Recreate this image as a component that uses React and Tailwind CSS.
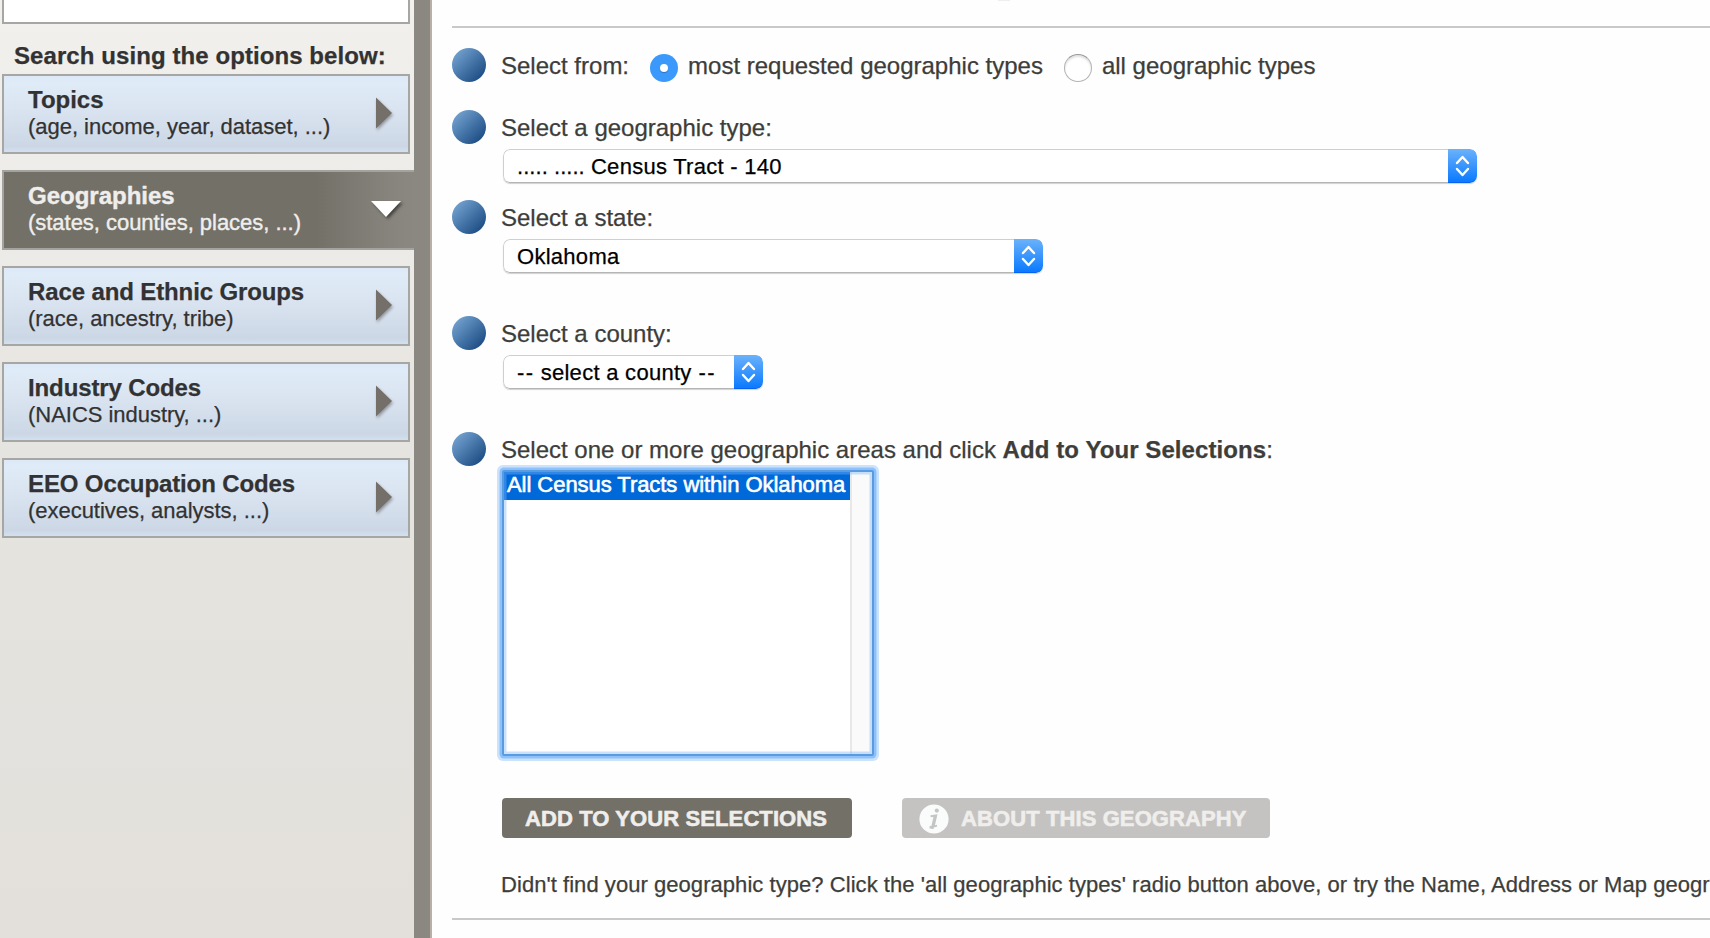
import React from "react";

const OPTIONS = [
  { title: "Topics", hint: "(age, income, year, dataset, ...)" },
  { title: "Geographies", hint: "(states, counties, places, ...)", active: true },
  { title: "Race and Ethnic Groups", hint: "(race, ancestry, tribe)", tight: true },
  { title: "Industry Codes", hint: "(NAICS industry, ...)", tight: true },
  { title: "EEO Occupation Codes", hint: "(executives, analysts, ...)", tight: true },
];

function RightArrow() {
  return (
    <svg width="24" height="40" viewBox="0 0 24 40" className="mt-[18px] mr-[10px] shrink-0 drop-shadow-[1px_2px_1.5px_rgba(60,60,60,0.45)]">
      <path d="M2 3.5 L18 19 L2 34.5 Z" fill="#746f68" />
    </svg>
  );
}

function DownArrow() {
  return (
    <svg width="36" height="24" viewBox="0 0 36 24" className="mt-[26px] mr-[9px] shrink-0 drop-shadow-[2px_2px_1.5px_rgba(40,38,34,0.7)]">
      <path d="M2 3 L32 3 L17 19 Z" fill="#ffffff" />
    </svg>
  );
}

function Option({ title, hint, active, tight }) {
  return (
    <div
      className={
        active
          ? "flex h-20 w-[412px] justify-between border-y-2 border-l-2 border-[#a3a39f] bg-[linear-gradient(to_right,#727067_0%,#727067_76%,#87847d_94%,#8b8881_100%)] text-[#efeeec] [-webkit-text-stroke:0.4px_#efeeec]"
          : "flex h-20 w-[408px] justify-between border-2 border-[#a6a6a4] bg-[linear-gradient(to_bottom,#dde9f7_0%,#e0ebf8_10%,#dbe5f2_40%,#ccd7e5_93%,#d2e0ef_100%)] text-[#323232]"
      }
    >
      <div className="pt-[10px] pl-6">
        <div className={tight ? "text-[24px] leading-7 font-bold tracking-[-0.12px]" : "text-[24px] leading-7 font-bold"}>{title}</div>
        <div className="text-[22px] leading-[26px] tracking-[-0.03px]">{hint}</div>
      </div>
      {active ? <DownArrow /> : <RightArrow />}
    </div>
  );
}

function Step({ children, className = "" }) {
  return (
    <div className={"flex h-[34px] items-start whitespace-nowrap " + className}>
      <span className="mr-[15px] size-[34px] shrink-0 rounded-full bg-[linear-gradient(135deg,#74a2d0_10%,#4c7cae_45%,#1c4c82_88%)]" />
      <span className="flex pt-1 text-[24px] leading-7">{children}</span>
    </div>
  );
}

function Select({ children, className }) {
  return (
    <div
      className={
        "mt-[5px] ml-[51px] flex h-[34px] overflow-hidden rounded-[7px] bg-white text-[22px] tracking-[0.28px] text-black shadow-[0_1px_1px_rgba(0,0,0,0.18)] " + className
      }
    >
      <div className="flex-1 rounded-l-[7px] border border-r-0 border-[#cfcfcf] border-b-[#b5b5b5] pt-1 pl-[13px] leading-[26px] whitespace-pre">{children}</div>
      <div className="flex w-[29px] items-center justify-center rounded-r-[7px] border-b border-[#0a63f0] bg-[linear-gradient(to_bottom,#6bb2fb,#0a7aff)]">
        <svg width="15" height="22" viewBox="0 0 15 22" fill="none" stroke="#fff" strokeWidth="2.4" strokeLinecap="round" strokeLinejoin="round">
          <path d="M2 8 L7.5 2 L13 8 M2 14 L7.5 20 L13 14" />
        </svg>
      </div>
    </div>
  );
}

export default function App() {
  return (
    <div className="flex h-[938px] w-[1710px] overflow-hidden bg-[#fefefe] font-['Liberation_Sans',Arial,sans-serif] text-[#3d3d3a] [-webkit-text-stroke:0.25px_currentColor]">
      <aside className="w-[414px] shrink-0 bg-[linear-gradient(to_bottom,#f1f0ec_0%,#ebeae6_30%,#e8e5e1_42%,#e4e3de_60%,#e3e0dc_100%)] pl-0.5">
        <div className="h-6 w-[408px] border-2 border-t-0 border-[#a6a6a4] bg-white" />
        <div className="mt-[18px] pl-3 text-[24px] leading-7 font-bold tracking-[0.08px] text-[#323232]">Search using the options below:</div>
        <div className="mt-1 flex flex-col gap-4">
          {OPTIONS.map((o) => (
            <Option key={o.title} {...o} />
          ))}
        </div>
      </aside>
      <div className="w-[18px] shrink-0 border-r-2 border-[#b8b0a6] bg-[#8b8881]" />

      <main className="min-w-0 flex-1 pl-5">
        <div className="mb-5 h-7 border-b-2 border-[#c9c9c9]">
          <div className="ml-[546px] h-px w-3 bg-[#eeeeee]" />
        </div>

        <Step>
          Select from:
          <span className="mt-[2px] mr-[10px] ml-[21px] flex size-7 items-center justify-center rounded-full bg-[#3b99fc]">
            <span className="size-2 rounded-full bg-white shadow-[0_1px_1px_rgba(0,0,0,0.25)]" />
          </span>
          most requested geographic types
          <span className="mt-[2px] mr-[10px] ml-[21px] size-7 rounded-full border border-[#b3b3b3] border-t-[#999999] bg-white shadow-[inset_0_2px_2px_rgba(0,0,0,0.12)]" />
          all geographic types
        </Step>

        <Step className="mt-7">Select a geographic type:</Step>
        <Select className="w-[974px]">
          <span className="tracking-[0.05px]">..... ..... </span>Census Tract - 140
        </Select>

        <Step className="mt-[17px]">Select a state:</Step>
        <Select className="w-[540px]">Oklahoma</Select>

        <Step className="mt-[43px]">Select a county:</Step>
        <Select className="w-[260px]">
          <span className="tracking-[1.3px]">--</span> select a county <span className="ml-[0.5px] tracking-[1.5px]">--</span>
        </Select>

        <Step className="mt-[43px]">
          <span className="whitespace-pre">Select one or more geographic areas and click </span>
          <b className="tracking-[0.08px]">Add to Your Selections</b>:
        </Step>

        <div className="relative mt-1 ml-[50px] flex h-[286px] w-[372px] rounded-[2px] border-2 border-[#5a9be0] bg-white shadow-[0_0_0_2.5px_#8cc1fb,0_0_0_5px_#cce3fe]">
          <div className="w-[346px]">
            <div className="h-7 bg-[#0069d9] pl-[3px] text-[22px] leading-[26px] tracking-[-0.05px] whitespace-nowrap text-white [-webkit-text-stroke:0.6px_white]">
              All Census Tracts within Oklahoma
            </div>
          </div>
          <div className="flex-1 border-l-2 border-[#e8e8e8] bg-[#fafafa]" />
          <div className="pointer-events-none absolute inset-0 shadow-[inset_0_0_0_2.5px_rgba(120,180,250,0.4)]" />
        </div>

        <div className="mt-[42px] ml-[50px] flex h-10 gap-[50px] text-[22px] leading-[26px] font-bold tracking-[0.1px] whitespace-nowrap text-[#efeeec]">
          <div className="w-[350px] rounded-[4px] bg-[#727067] pt-2 pl-[23px] [-webkit-text-stroke:0.6px_#efeeec]">ADD TO YOUR SELECTIONS</div>
          <div className="flex w-[368px] rounded-[4px] bg-[#c4c3c1] pt-2 pl-[17px] [-webkit-text-stroke:0.6px_#efeeec]">
            <svg width="30" height="30" viewBox="0 0 30 30" className="-mt-0.5 mr-3">
              <circle cx="15" cy="15" r="14.6" fill="#fafbfb" />
              <circle cx="17.8" cy="6.6" r="2.1" fill="#c4c5c5" />
              <path d="M11.6 12.2 L17.2 11.4 L14.6 22.6 L18 21.6" fill="none" stroke="#c4c5c5" strokeWidth="2" />
              <path d="M16 12 L13.4 23.6 L10.6 23" fill="none" stroke="#c4c5c5" strokeWidth="2.6" />
            </svg>
            ABOUT THIS GEOGRAPHY
          </div>
        </div>

        <div className="mt-[34px] ml-[49px] text-[22px] leading-[26px] tracking-[0.05px] whitespace-nowrap">
          Didn't find your geographic type? Click the 'all geographic types' radio button above, or try the Name, Address or Map geogr
        </div>
        <div className="mt-5 h-0.5 bg-[#c9c9c9]" />
      </main>
    </div>
  );
}
